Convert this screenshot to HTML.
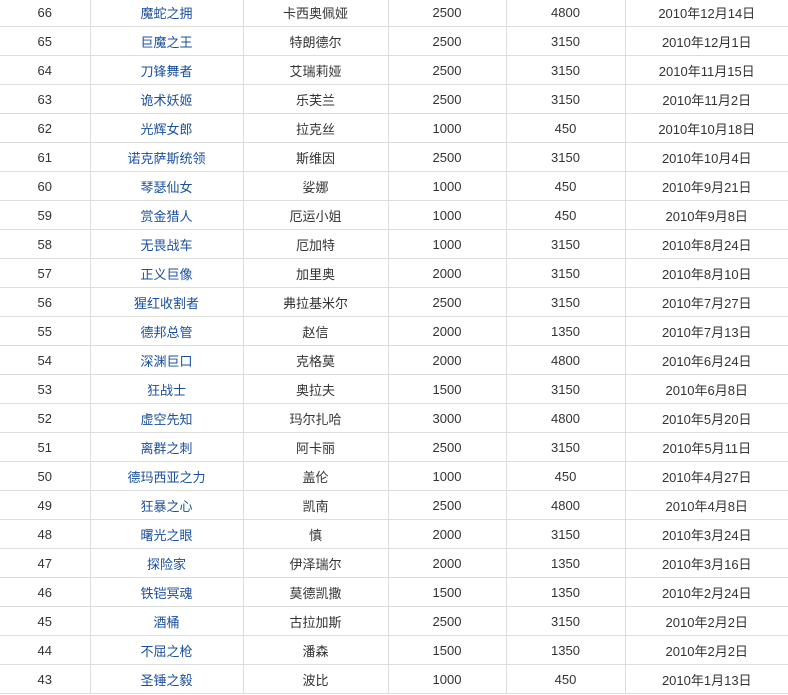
<!DOCTYPE html>
<html><head><meta charset="utf-8"><style>
html,body{margin:0;padding:0;background:#fff;width:788px;height:695px;overflow:hidden}
table{position:absolute;left:0;top:-2px;border-collapse:collapse;font-family:"Liberation Sans","Noto Sans CJK SC",sans-serif;font-size:13px;color:#333;table-layout:fixed;width:788px}
td{height:28px;padding:0;text-align:center;border-bottom:1px solid #ddd;border-left:1px solid #ddd;white-space:nowrap}
td:first-child{border-left:none}
td a{color:#1a4f9c;text-decoration:none}
</style></head><body>
<table>
<colgroup><col style="width:90px"><col style="width:153px"><col style="width:145px"><col style="width:118px"><col style="width:119px"><col style="width:163px"></colgroup>
<tr><td>66</td><td><a>魔蛇之拥</a></td><td>卡西奥佩娅</td><td>2500</td><td>4800</td><td>2010年12月14日</td></tr>
<tr><td>65</td><td><a>巨魔之王</a></td><td>特朗德尔</td><td>2500</td><td>3150</td><td>2010年12月1日</td></tr>
<tr><td>64</td><td><a>刀锋舞者</a></td><td>艾瑞莉娅</td><td>2500</td><td>3150</td><td>2010年11月15日</td></tr>
<tr><td>63</td><td><a>诡术妖姬</a></td><td>乐芙兰</td><td>2500</td><td>3150</td><td>2010年11月2日</td></tr>
<tr><td>62</td><td><a>光辉女郎</a></td><td>拉克丝</td><td>1000</td><td>450</td><td>2010年10月18日</td></tr>
<tr><td>61</td><td><a>诺克萨斯统领</a></td><td>斯维因</td><td>2500</td><td>3150</td><td>2010年10月4日</td></tr>
<tr><td>60</td><td><a>琴瑟仙女</a></td><td>娑娜</td><td>1000</td><td>450</td><td>2010年9月21日</td></tr>
<tr><td>59</td><td><a>赏金猎人</a></td><td>厄运小姐</td><td>1000</td><td>450</td><td>2010年9月8日</td></tr>
<tr><td>58</td><td><a>无畏战车</a></td><td>厄加特</td><td>1000</td><td>3150</td><td>2010年8月24日</td></tr>
<tr><td>57</td><td><a>正义巨像</a></td><td>加里奥</td><td>2000</td><td>3150</td><td>2010年8月10日</td></tr>
<tr><td>56</td><td><a>猩红收割者</a></td><td>弗拉基米尔</td><td>2500</td><td>3150</td><td>2010年7月27日</td></tr>
<tr><td>55</td><td><a>德邦总管</a></td><td>赵信</td><td>2000</td><td>1350</td><td>2010年7月13日</td></tr>
<tr><td>54</td><td><a>深渊巨口</a></td><td>克格莫</td><td>2000</td><td>4800</td><td>2010年6月24日</td></tr>
<tr><td>53</td><td><a>狂战士</a></td><td>奥拉夫</td><td>1500</td><td>3150</td><td>2010年6月8日</td></tr>
<tr><td>52</td><td><a>虚空先知</a></td><td>玛尔扎哈</td><td>3000</td><td>4800</td><td>2010年5月20日</td></tr>
<tr><td>51</td><td><a>离群之刺</a></td><td>阿卡丽</td><td>2500</td><td>3150</td><td>2010年5月11日</td></tr>
<tr><td>50</td><td><a>德玛西亚之力</a></td><td>盖伦</td><td>1000</td><td>450</td><td>2010年4月27日</td></tr>
<tr><td>49</td><td><a>狂暴之心</a></td><td>凯南</td><td>2500</td><td>4800</td><td>2010年4月8日</td></tr>
<tr><td>48</td><td><a>曙光之眼</a></td><td>慎</td><td>2000</td><td>3150</td><td>2010年3月24日</td></tr>
<tr><td>47</td><td><a>探险家</a></td><td>伊泽瑞尔</td><td>2000</td><td>1350</td><td>2010年3月16日</td></tr>
<tr><td>46</td><td><a>铁铠冥魂</a></td><td>莫德凯撒</td><td>1500</td><td>1350</td><td>2010年2月24日</td></tr>
<tr><td>45</td><td><a>酒桶</a></td><td>古拉加斯</td><td>2500</td><td>3150</td><td>2010年2月2日</td></tr>
<tr><td>44</td><td><a>不屈之枪</a></td><td>潘森</td><td>1500</td><td>1350</td><td>2010年2月2日</td></tr>
<tr><td>43</td><td><a>圣锤之毅</a></td><td>波比</td><td>1000</td><td>450</td><td>2010年1月13日</td></tr>
</table>
</body></html>
